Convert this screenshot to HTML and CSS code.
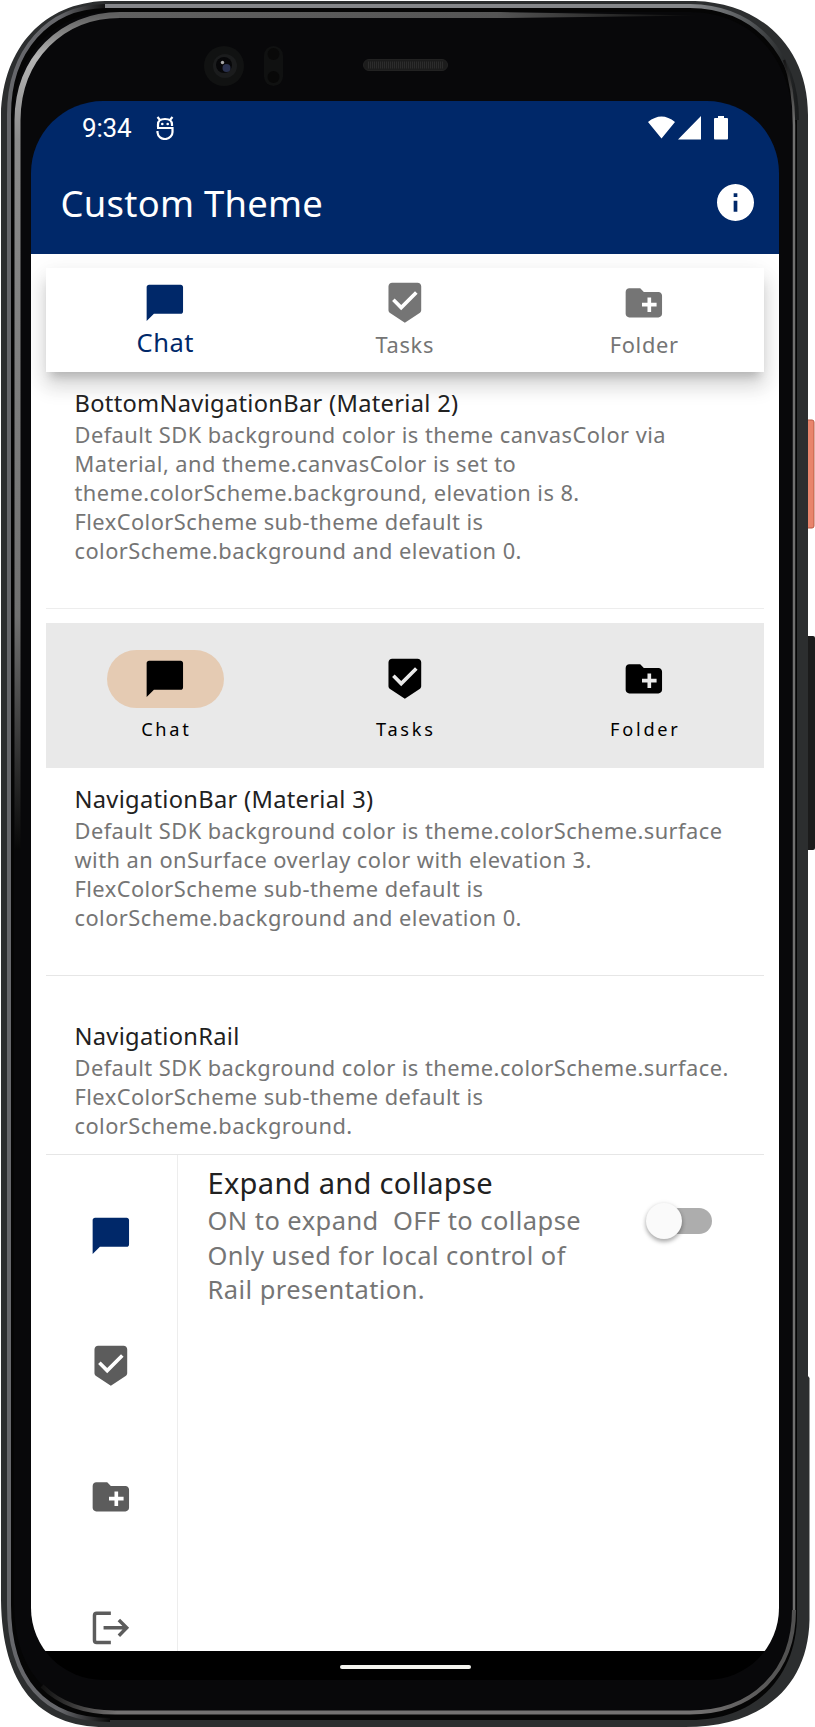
FILE: index.html
```html
<!DOCTYPE html>
<html lang="en">
<head>
<meta charset="utf-8">
<title>Custom Theme</title>
<link rel="stylesheet" href="styles.css">
</head>
<body>
<svg class="defs" width="0" height="0" aria-hidden="true">
  <symbol id="chat" viewBox="0 0 24 24"><path d="M20.700 2H3.300C2.600 2 2 2.600 2 3.300V22l4-4h14.700c.7 0 1.300-.6 1.300-1.300V3.300c0-.7-.6-1.300-1.300-1.300z"/></symbol>
  <symbol id="tasks" viewBox="0 0 24 24"><path d="M19 1H5c-1.100 0-1.990.9-1.990 2L3 15.930c0 .69.350 1.300.880 1.660L12 23l8.110-5.410c.53-.36.880-.97.880-1.660L21 3c0-1.100-.9-2-2-2zm-9 15l-5-5 1.410-1.410L10 13.170l7.590-7.590L19 7l-9 9z"/></symbol>
  <symbol id="folder" viewBox="0 0 24 24"><path d="M20 6h-8l-2-2H4c-1.110 0-1.990.89-1.990 2L2 18c0 1.110.89 2 2 2h16c1.110 0 2-.89 2-2V8c0-1.110-.89-2-2-2zm-1 8h-3v3h-2v-3h-3v-2h3V9h2v3h3v2z"/></symbol>
  <symbol id="logout" viewBox="0 0 24 24"><path d="M12 4H4.200C3.500 4 3 4.500 3 5.200v13.600c0 .7.500 1.200 1.200 1.200H12M8 12h12.500M16.400 7.700 20.700 12l-4.300 4.300" fill="none" stroke="currentColor" stroke-width="1.900"/></symbol>
</svg>
<div class="phone">
  <svg class="frame" viewBox="0 0 815 1727" aria-hidden="true">
    <defs>
      <linearGradient id="metal" x1="0" y1="0" x2="1" y2="0"><stop offset="0" stop-color="#85868a"/><stop offset=".85" stop-color="#85878a"/><stop offset=".93" stop-color="#55585a"/><stop offset="1" stop-color="#1a1c1d"/></linearGradient>
      <linearGradient id="shine" x1="0" y1="0" x2="0" y2="1"><stop offset="0" stop-color="#606060"/><stop offset=".05" stop-color="#b4b4b4"/><stop offset=".15" stop-color="#8b8b8b"/><stop offset=".72" stop-color="#707070"/><stop offset="1" stop-color="#080808"/></linearGradient>
      <linearGradient id="topshine" x1="0" y1="0" x2="1" y2="0"><stop offset="0" stop-color="#606060"/><stop offset=".65" stop-color="#555"/><stop offset="1" stop-color="#090909"/></linearGradient>
      <linearGradient id="bottomshine" x1="0" y1="0" x2="1" y2="0"><stop offset="0" stop-color="#111"/><stop offset=".1" stop-color="#747272"/><stop offset=".86" stop-color="#747272"/><stop offset="1" stop-color="#505050"/></linearGradient>
      <linearGradient id="lip" x1="0" y1="0" x2="1" y2="0"><stop offset="0" stop-color="#66676b"/><stop offset=".5" stop-color="#66676b"/><stop offset="1" stop-color="#0a0a0a"/></linearGradient>
      <linearGradient id="rightshine" x1="0" y1="0" x2="0" y2="1"><stop offset="0" stop-color="#151515"/><stop offset=".04" stop-color="#707070"/><stop offset="1" stop-color="#707070"/></linearGradient>
    </defs>
    <path class="power" d="M807 420h5q2 0 2 2v104q0 2-2 2h-5z"/>
    <path class="volume" d="M807 636h6q2 0 2 2v210q0 2-2 2h-6z"/>
    <path class="shell" d="M105 1H695C762 3 808 48 808 115V1376L809.500 1378V1620C808 1687 762 1727 685 1727H105C38 1727 2 1685 1 1600V115C3 46 45 3 105 1Z"/>
    <path class="groove" d="M105 7H690C756 7 797 54 797 120V1615C797 1672 760 1720 690 1720H110C44 1720 10 1680 10 1605V115C10 50 48 7 105 7Z"/>
    <path d="M105 6H690C756 7 797 54 797 120" fill="none" stroke="url(#metal)" stroke-width="4"/>
    <path d="M105 6C48 7 9 50 9 115V1605C9 1680 44 1720 110 1720" fill="none" stroke="url(#lip)" stroke-width="4"/>
    <path class="bezel" d="M110 12H690C752 12 793 60 793 125V1610C793 1670 752 1711 690 1711H115C50 1711 14 1672 14 1603V115C14 55 55 12 110 12Z"/>
    <path d="M784 60C791 80 794 100 794 125V1610" fill="none" stroke="url(#rightshine)" stroke-width="2.500"/>
    <path d="M794 1610C794 1670 755 1712.500 690 1712.500H115C80 1712.500 58 1702 42 1686" fill="none" stroke="url(#bottomshine)" stroke-width="4"/>
    <path d="M17.500 850V120C18 58 62 15 120 15" fill="none" stroke="url(#shine)" stroke-width="6"/>
    <path d="M119 12H500L700 15.500 500 18H119Z" fill="url(#topshine)"/>
    <circle cx="224" cy="66" r="20" fill="#111212"/><circle cx="225" cy="66" r="12" fill="#1b1c1d"/><circle cx="224" cy="65" r="8" fill="#070709"/><circle cx="226.500" cy="68" r="4" fill="#29304d"/><circle cx="222.500" cy="62.500" r="1.700" fill="#aaa"/>
    <rect x="264" y="46" width="19" height="40" rx="9.500" fill="#101111"/><circle cx="273.500" cy="54" r="6" fill="#090909"/><circle cx="273.500" cy="77" r="6" fill="#080808"/>
    <rect x="363.500" y="59.500" width="84" height="11" rx="5.500" fill="#1c1c1c" stroke="#222"/>
    <path d="M368 65h76" stroke="#2c2c2c" stroke-width="7" stroke-dasharray="1 1"/>
  </svg>
  <main class="screen">
    <header class="top">
      <div class="status">
        <span class="clock">9:34</span>
        <svg class="debug" viewBox="0 0 18 24"><path d="M2 11V8.500Q2 3 9 3t7 5.500V10M1 12h15.500v3.500a7.500 7 0 0 1-15 1V15M1.500 1l2.500 3M16.500 1l-2.500 3" fill="none" stroke="#fff" stroke-width="2.200"/><circle cx="6.300" cy="8" r="1.300" fill="#fff"/><circle cx="11.700" cy="8" r="1.300" fill="#fff"/></svg>
        <svg class="signals" viewBox="0 0 80 24"><path d="M0 6Q13.500-5 27 6L13.500 22.500ZM30 23.500H53V0ZM66 3q0-1 1-1h3V0h6v2h3q1 0 1 1V22.500q0 1-1 1H67q-1 0-1-1Z" fill="#fff"/></svg>
      </div>
      <div class="appbar">
        <h1>Custom Theme</h1>
        <svg class="info" viewBox="2 2 20 20"><path d="M12 2C6.480 2 2 6.480 2 12s4.480 10 10 10 10-4.480 10-10S17.520 2 12 2zm1 15h-2v-6h2v6zm0-8h-2V7h2v2z" fill="#fff"/></svg>
      </div>
    </header>
    <div class="content">
      <nav class="bottom-nav">
        <div class="tab active"><svg class="icon"><use href="#chat"/></svg><span>Chat</span></div>
        <div class="tab"><svg class="icon"><use href="#tasks"/></svg><span>Tasks</span></div>
        <div class="tab"><svg class="icon"><use href="#folder"/></svg><span>Folder</span></div>
      </nav>
      <section class="tile first">
        <h2>BottomNavigationBar (Material 2)</h2>
        <p>Default SDK background color is theme canvasColor via<br>Material, and theme.canvasColor is set to<br>theme.colorScheme.background, elevation is 8.<br>FlexColorScheme sub-theme default is<br>colorScheme.background and elevation 0.</p>
      </section>
      <nav class="nav-bar">
        <div class="dest active"><div class="pill"><svg class="icon"><use href="#chat"/></svg></div><span>Chat</span></div>
        <div class="dest"><div class="pill"><svg class="icon"><use href="#tasks"/></svg></div><span>Tasks</span></div>
        <div class="dest"><div class="pill"><svg class="icon"><use href="#folder"/></svg></div><span>Folder</span></div>
      </nav>
      <section class="tile second">
        <h2>NavigationBar (Material 3)</h2>
        <p>Default SDK background color is theme.colorScheme.surface<br>with an onSurface overlay color with elevation 3.<br>FlexColorScheme sub-theme default is<br>colorScheme.background and elevation 0.</p>
      </section>
      <section class="tile third">
        <h2>NavigationRail</h2>
        <p>Default SDK background color is theme.colorScheme.surface.<br>FlexColorScheme sub-theme default is<br>colorScheme.background.</p>
      </section>
      <div class="rail-row">
        <nav class="rail">
          <svg class="icon selected"><use href="#chat"/></svg>
          <svg class="icon"><use href="#tasks"/></svg>
          <svg class="icon"><use href="#folder"/></svg>
          <svg class="icon"><use href="#logout"/></svg>
        </nav>
        <section class="expand">
          <div><h3>Expand and collapse</h3>
          <p>ON to expand&nbsp; OFF to collapse<br>Only used for local control of<br>Rail presentation.</p></div>
          <div class="switch"><div class="thumb"></div></div>
        </section>
      </div>
    </div>
    <footer class="gesture"><div class="handle"></div></footer>
  </main>
</div>
</body>
</html>
```
FILE: styles.css
```css
* { box-sizing: border-box; }
body { margin: 0; background: #fff; font-family: "Noto Sans", sans-serif; }
h1, h2, h3, p { margin: 0; font-weight: 400; white-space: nowrap; }
svg { display: block; flex: none; }
.defs { position: absolute; }
.phone { position: relative; width: 815px; height: 1727px; padding: 101px 36px 47px 31px; overflow: hidden; }
.frame { position: absolute; inset: 0; width: 815px; height: 1727px; }
.power { fill: #e9846c; stroke: #ba5a45; }
.volume { fill: #1b1b1b; }
.shell { fill: #2c2e2f; }
.groove { fill: #050505; }
.bezel { fill: #08080a; }

.screen { position: relative; height: 1579px; display: flex; flex-direction: column; overflow: hidden; border-radius: 72px; }
.top { height: 153px; flex: none; background: #002869; color: #fff; }
.status { height: 50px; display: flex; align-items: center; padding: 3px 51px 0 51px; }
.clock { font: 26px/30px Roboto, sans-serif; letter-spacing: -.2px; }
.debug { width: 18px; height: 24px; margin-left: 24.500px; }
.signals { width: 80px; height: 24px; margin-left: auto; }
.appbar { display: flex; align-items: center; justify-content: space-between; height: 103px; padding: 0 25px 0 29.500px; }
h1 { font-size: 36.4px; line-height: 50px; letter-spacing: .27px; }
.info { width: 37px; height: 37px; }

.content { flex: 1; min-height: 0; padding: 14px 15px 0 14.5px; overflow: hidden; background: #fff; }
.icon { width: 43.7px; height: 43.7px; fill: currentColor; }
.bottom-nav { display: flex; height: 104px; color: #757575; background: #fff; box-shadow: 0 9px 9px -5px rgba(0,0,0,.18), 0 14px 18px 2px rgba(0,0,0,.12), 0 5px 25px 2px rgba(0,0,0,.06); }
.tab { flex: 1; display: flex; flex-direction: column; align-items: center; padding-top: 13px; font-size: 21.84px; line-height: 30px; letter-spacing: .7px; }
.tab span { margin-top: 5px; }
.tab.active { color: #002869; font-size: 25.5px; letter-spacing: .5px; }
.tab.active span { margin-top: 2px; }

.tile { padding: 0 29px; }
.tile h2 { font-size: 23.66px; line-height: 32px; letter-spacing: .3px; color: #212121; }
.tile p { font-size: 21.84px; line-height: 29.12px; letter-spacing: .455px; color: #757575; }
.first { height: 237px; padding-top: 15px; border-bottom: 1px solid #ededed; }
.second { height: 208px; padding-top: 15px; border-bottom: 1px solid #e6e6e6; }
.third { height: 179px; padding-top: 44px; border-bottom: 1px solid #e6e6e6; }
.tile p { margin-top: 1px; }
.first p { line-height: 29px; }
.nav-bar { display: flex; height: 145px; margin-top: 14px; background: #e9e9e9; color: #000; }
.dest { flex: 1; display: flex; flex-direction: column; align-items: center; padding-top: 27px; font-size: 18.2px; line-height: 26px; letter-spacing: 2.73px; }
.dest span { margin-top: 8px; padding-left: 2.200px; }
.pill { width: 117px; height: 58px; border-radius: 29px; display: flex; align-items: center; justify-content: center; }
.active .pill { background: #e5cbb3; }

.rail-row { display: flex; height: 500px; }
.rail { width: 132.500px; flex: none; display: flex; flex-direction: column; align-items: center; gap: 87.300px; padding-top: 58.500px; border-right: 1px solid #ededed; color: #5c5c5c; }
.selected { color: #002869; }
.expand { flex: 1; display: flex; justify-content: space-between; align-items: flex-start; padding: 8px 52.500px 0 29.500px; }
.expand h3 { font-size: 29.12px; line-height: 40px; letter-spacing: .27px; color: #212121; }
.expand p { font-size: 25.48px; line-height: 34.6px; letter-spacing: .455px; color: #757575; }
.switch { width: 60px; height: 26px; border-radius: 13px; margin-top: 45px; background: #adadad; }
.thumb { width: 36.400px; height: 36.400px; margin: -5px 0 0 -5.500px; border-radius: 50%; background: #fafafa; box-shadow: 0 3px 4px rgba(0,0,0,.25), 0 1px 5px rgba(0,0,0,.15); }
.gesture { height: 29px; flex: none; display: flex; align-items: center; justify-content: center; padding-top: 2px; background: #000; }
.handle { width: 131px; height: 4px; border-radius: 2px; background: #f5f5f0; }
```
